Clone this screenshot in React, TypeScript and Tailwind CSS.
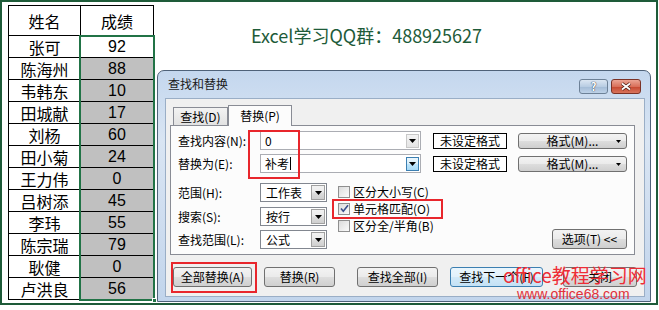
import React from "react"

const cjk = "font-['Noto_Sans_CJK_SC',sans-serif]"

const rows: [string, number][] = [
  ["张可", 92],
  ["陈海州", 88],
  ["韦韩东", 10],
  ["田城献", 17],
  ["刘杨", 60],
  ["田小菊", 24],
  ["王力伟", 0],
  ["吕树添", 45],
  ["李玮", 55],
  ["陈宗瑞", 79],
  ["耿健", 0],
  ["卢洪良", 56],
]

const btnBg =
  "bg-[linear-gradient(#f3f3f3,#ebebeb_48%,#dddddd_52%,#cfcfcf)] border border-[#707070] rounded-[3px]"

function Arrow({ small }: { small?: boolean }) {
  return (
    <svg width={small ? 5 : 7} height={small ? 3 : 4} viewBox="0 0 7 4">
      <path d="M0 0h7L3.5 4z" fill="#000" />
    </svg>
  )
}

function DropBtn({ hover }: { hover?: boolean }) {
  return (
    <div
      className={
        hover
          ? "w-[13px] h-[14px] mr-[1px] flex items-center justify-center border border-[#3c7fb1] bg-[linear-gradient(#eaf6fd,#d9f0fc_48%,#bee6fd_52%,#a7d9f5)]"
          : "w-[13px] h-[14px] mr-[1px] flex items-center justify-center border border-[#c8c8c8] bg-[linear-gradient(#f4f4f4,#e4e4e4)]"
      }
    >
      <Arrow />
    </div>
  )
}

function Combo({ children, hover }: { children: React.ReactNode; hover?: boolean }) {
  return (
    <div className="w-[161px] h-[19px] border border-[#abadb3] bg-white flex items-center">
      <div className="flex-1 pl-[4px] flex items-center text-[12px] leading-none">{children}</div>
      <DropBtn hover={hover} />
    </div>
  )
}

function Select({ value }: { value: string }) {
  return (
    <div className="w-[67px] h-[19px] border border-[#828790] bg-white flex items-center">
      <div className="flex-1 pl-[5px] text-[12px] leading-none">{value}</div>
      <div className="w-[14px] h-[15px] mr-[1px] flex items-center justify-center border border-[#a0a0a0] bg-[linear-gradient(#f2f2f2,#ebebeb_48%,#dddddd_52%,#cfcfcf)]">
        <Arrow />
      </div>
    </div>
  )
}

function Check({ label, checked }: { label: string; checked?: boolean }) {
  return (
    <div className="h-[17px] flex items-center">
      <div className="w-[12px] h-[12px] border border-[#8f8f8f] bg-[linear-gradient(135deg,#dcdcdc,#fbfbfb)] flex items-center justify-center">
        {checked && (
          <svg width="9" height="9" viewBox="0 0 9 9">
            <path d="M1 4.5l2.3 2.8L8 1.2" fill="none" stroke="#3b4f8c" strokeWidth="1.6" />
          </svg>
        )}
      </div>
      <span className="ml-[3px] text-[12px] leading-none">{label}</span>
    </div>
  )
}

function Btn({ w, children, primary }: { w: string; children: React.ReactNode; primary?: boolean }) {
  return (
    <div
      className={
        (primary
          ? "bg-[linear-gradient(#eaf6fd,#e2f1fb_48%,#d1e9f8_52%,#c4e1f5)] border border-[#3c7fb1] rounded-[3px] "
          : btnBg + " ") +
        w +
        " h-[20px] flex items-center justify-center text-[12px] leading-none"
      }
    >
      {children}
    </div>
  )
}

export default function App() {
  return (
    <div className={"w-[659px] h-[310px] bg-white text-black " + cjk}>
      <div className="w-[658px] h-[305px] border-2 border-[#1e5b39] flex">
        {/* 表格 */}
        <div className="ml-[6px] mt-[3px] self-start flex border-l border-t border-black text-[16px]">
          <div className="flex flex-col w-[72px]">
            <div className="h-[30px] border-r border-b border-black flex items-center justify-center">姓名</div>
            {rows.map(([n]) => (
              <div key={n} className="h-[22px] border-r border-b border-black flex items-center justify-center leading-none">
                {n}
              </div>
            ))}
          </div>
          <div className="flex flex-col w-[73px]">
            <div className="h-[30px] border-r border-b border-black flex items-center justify-center">成绩</div>
            <div className="relative">
              {rows.map(([n, s], i) => (
                <div
                  key={n}
                  className={
                    (i === 0 ? "bg-white " : "bg-[#c0c0c0] ") +
                    "h-[22px] border-r border-b border-black flex items-center justify-center leading-none font-['Liberation_Sans',sans-serif] text-[16px]"
                  }
                >
                  {s}
                </div>
              ))}
              <div className="absolute left-[-2px] top-[-1px] right-[-1px] bottom-[-1px] border-2 border-[#217346]" />
              <div className="absolute right-[-3px] bottom-[-3px] w-[5px] h-[5px] bg-[#217346] border border-white" />
            </div>
          </div>
        </div>

        {/* 右侧 */}
        <div className="ml-[3px] flex flex-col">
          <div className="ml-[94px] mt-[21px] h-[24px] text-[18px] leading-[24px] text-[#1e5b39] whitespace-nowrap">
            Excel学习QQ群：488925627
          </div>

          {/* 对话框 */}
          <div className="relative mt-[23px] w-[494px] h-[232px] rounded-t-[7px] border border-[#4f6279] bg-[linear-gradient(#c4d7ee,#d9e5f3_30%,#cddcef_70%,#c2d5ec)] flex flex-col">
            <div className="h-[27px] flex items-start">
              <span className="ml-[10px] mt-[7px] text-[12px] leading-none text-[#1a1a1a]">查找和替换</span>
              <div className="ml-auto mr-[9px] mt-[8px] flex gap-[3px]">
                <div className="w-[29px] h-[15px] rounded-[3px] border border-[#6d8197] bg-[linear-gradient(#dbe6f2,#b9cde3_50%,#a3bbd6_52%,#bed2e8)] flex items-center justify-center text-[11px] font-bold leading-none text-white [text-shadow:0_0_1px_#2b3a4e,0_0_1px_#2b3a4e]">
                  ?
                </div>
                <div className="w-[30px] h-[15px] rounded-[3px] border border-[#7b3226] bg-[linear-gradient(#eba493,#d9705a_50%,#c6472f_52%,#d8745c)] flex items-center justify-center">
                  <svg width="12" height="9" viewBox="0 0 12 9">
                    <path d="M2 1.5l8 6M10 1.5l-8 6" stroke="#4a1c12" strokeWidth="3.4" />
                    <path d="M2 1.5l8 6M10 1.5l-8 6" stroke="#fff" strokeWidth="1.8" />
                  </svg>
                </div>
              </div>
            </div>

            {/* 客户区 */}
            <div className="ml-[7px] mr-[5px] h-[199px] border border-[#9aaec6] bg-[#f0f0f0] flex flex-col">
              <div className="pt-[6px] pl-[4px]">
                <div className="flex items-end h-[20px] pl-[3px]">
                  <div className="w-[55px] h-[18px] border border-b-0 border-[#898c95] bg-[linear-gradient(#f3f3f3,#e2e2e2)] flex items-center justify-center text-[12px] leading-none">
                    查找(D)
                  </div>
                  <div className="self-start relative z-10 w-[64px] h-[21px] border border-b-0 border-[#898c95] bg-[#fcfcfc] flex items-center justify-center text-[12px] leading-none">
                    替换(P)
                  </div>
                </div>
                <div className="w-[465px] h-[130px] border border-[#898c95] bg-[#fcfcfc] pl-[7px] pt-[5px]">
                  <div className="flex items-center h-[19px]">
                    <span className="w-[82px] text-[12px] leading-none">查找内容(N):</span>
                    <Combo>0</Combo>
                    <div className="ml-[12px] w-[74px] h-[16px] border border-black bg-white flex items-center justify-center text-[12px] leading-none">
                      未设定格式
                    </div>
                    <div className={btnBg + " relative ml-[11px] w-[109px] h-[16px] flex items-center justify-center text-[12px] leading-none"}>
                      格式(M)...
                      <div className="absolute right-[5px] top-[6px] flex">
                        <Arrow small />
                      </div>
                    </div>
                  </div>
                  <div className="flex items-center h-[19px] mt-[4px]">
                    <span className="w-[82px] text-[12px] leading-none">替换为(E):</span>
                    <Combo hover>
                      补考<span className="ml-[1px] w-[1px] h-[13px] bg-black" />
                    </Combo>
                    <div className="ml-[12px] w-[74px] h-[16px] border border-black bg-white flex items-center justify-center text-[12px] leading-none">
                      未设定格式
                    </div>
                    <div className={btnBg + " relative ml-[11px] w-[109px] h-[16px] flex items-center justify-center text-[12px] leading-none"}>
                      格式(M)...
                      <div className="absolute right-[5px] top-[6px] flex">
                        <Arrow small />
                      </div>
                    </div>
                  </div>

                  <div className="flex mt-[10px]">
                    <div className="flex flex-col">
                      <div className="flex items-center">
                        <span className="w-[82px] text-[12px] leading-none">范围(H):</span>
                        <Select value="工作表" />
                      </div>
                      <div className="flex items-center mt-[5px]">
                        <span className="w-[82px] text-[12px] leading-none">搜索(S):</span>
                        <Select value="按行" />
                      </div>
                      <div className="flex items-center mt-[4px]">
                        <span className="w-[82px] text-[12px] leading-none">查找范围(L):</span>
                        <Select value="公式" />
                      </div>
                    </div>
                    <div className="ml-[11px] flex flex-col">
                      <Check label="区分大小写(C)" />
                      <Check label="单元格匹配(O)" checked />
                      <Check label="区分全/半角(B)" />
                    </div>
                    <div className="ml-auto mr-[7px] self-end">
                      <Btn w="w-[75px]">选项(T) &lt;&lt;</Btn>
                    </div>
                  </div>
                </div>
              </div>

              <div className="flex mt-[12px] ml-[7px]">
                <Btn w="w-[79px]">全部替换(A)</Btn>
                <div className="ml-[12px]">
                  <Btn w="w-[71px]">替换(R)</Btn>
                </div>
                <div className="ml-[22px]">
                  <Btn w="w-[81px]">查找全部(I)</Btn>
                </div>
                <div className="ml-[12px]">
                  <Btn w="w-[93px]" primary>查找下一个(F)</Btn>
                </div>
                <div className="ml-[20px]">
                  <Btn w="w-[74px]">关闭</Btn>
                </div>
              </div>
            </div>

            {/* 标注 */}
            <div className="absolute left-[90px] top-[59px] w-[52px] h-[49px] border-2 border-[#e8262c]" />
            <div className="absolute left-[174px] top-[128px] w-[111px] h-[20px] border-2 border-[#e8262c]" />
            <div className="absolute left-[13px] top-[191px] w-[86px] h-[31px] border-2 border-[#e8262c]" />

            {/* 水印 */}
            <div className="absolute left-[345px] top-[193px] text-[19px] leading-[22px] text-[#ee2d36] whitespace-nowrap">
              office教程学习网
            </div>
            <div className="absolute left-[359px] top-[215px] text-[14px] leading-[16px] text-[#e2313a] whitespace-nowrap font-['Liberation_Sans',sans-serif]">
              www.office68.com
            </div>
          </div>
        </div>
      </div>
    </div>
  )
}
